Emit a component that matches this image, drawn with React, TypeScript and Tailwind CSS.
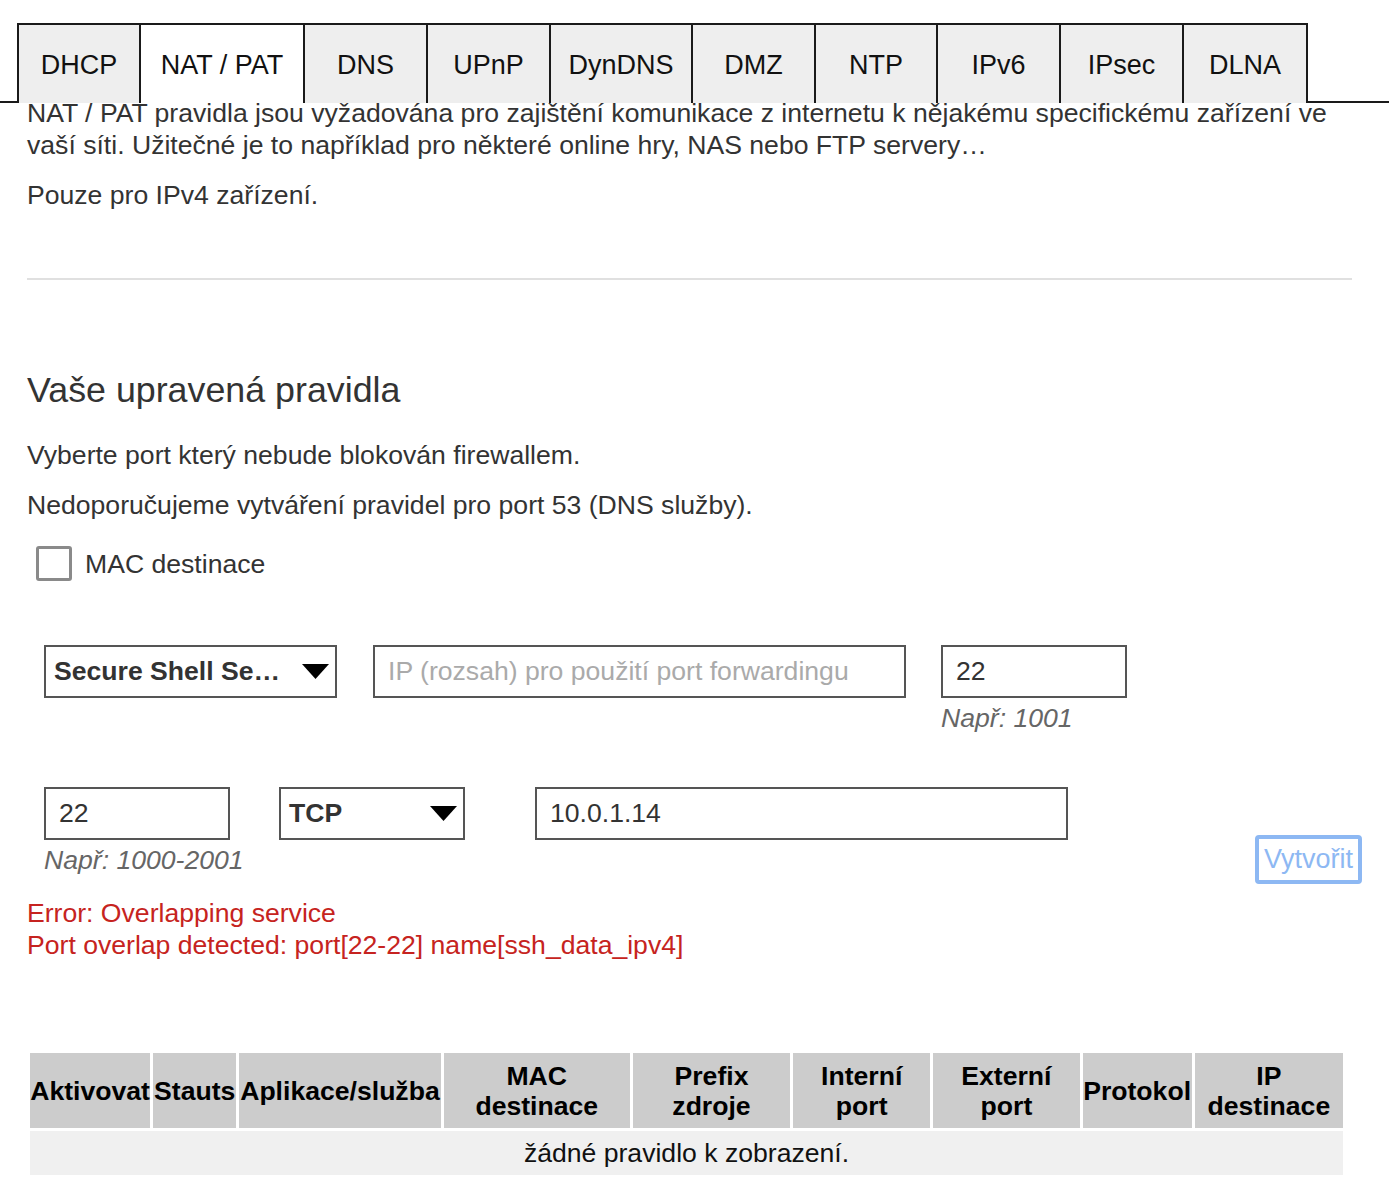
const tabs = [
  { label: "DHCP", w: "w-[124px] border-l-2" },
  { label: "NAT / PAT", w: "w-[164px]", active: true },
  { label: "DNS", w: "w-[123px]" },
  { label: "UPnP", w: "w-[123px]" },
  { label: "DynDNS", w: "w-[142px]" },
  { label: "DMZ", w: "w-[123px]" },
  { label: "NTP", w: "w-[122px]" },
  { label: "IPv6", w: "w-[123px]" },
  { label: "IPsec", w: "w-[123px]" },
  { label: "DLNA", w: "w-[124px]" },
];

const columns = [
  { label: ["Aktivovat"], w: "w-[120px]" },
  { label: ["Stauts"], w: "w-[83px]" },
  { label: ["Aplikace/služba"], w: "w-[201px]" },
  { label: ["MAC", "destinace"], w: "w-[186px]" },
  { label: ["Prefix", "zdroje"], w: "w-[157px]" },
  { label: ["Interní", "port"], w: "w-[137px]" },
  { label: ["Externí", "port"], w: "w-[146px]" },
  { label: ["Protokol"], w: "w-[109px]" },
  { label: ["IP", "destinace"], w: "w-[148px]" },
];

function SelectBox({ value, className }: { value: string; className: string }) {
  return (
    <div
      className={`flex h-[53px] items-center justify-between border-2 border-[#555] bg-white pl-[8px] pr-[6px] ${className}`}
    >
      <span className="text-[26.6px] font-bold text-[#333]">{value}</span>
      <svg width="27" height="15" viewBox="0 0 27 15">
        <polygon points="0,0 27,0 13.5,15" fill="#000" />
      </svg>
    </div>
  );
}

function TextBox({ value, placeholder, className }: { value?: string; placeholder?: string; className: string }) {
  return (
    <div className={`flex h-[53px] items-center border-2 border-[#555] bg-white pl-[13px] ${className}`}>
      {value ? (
        <span className="text-[26.6px] text-[#333]">{value}</span>
      ) : (
        <span className="text-[26.6px] text-[#aaa]">{placeholder}</span>
      )}
    </div>
  );
}

export default function App() {
  return (
    <div className="min-h-[1200px] bg-white font-['Liberation_Sans',Arial,sans-serif] text-[#333]">
      {/* Tabs */}
      <div className="mt-[23px] flex h-[80px]">
        <div className="w-[17px] border-b-2 border-[#1a1a1a]" />
        {tabs.map((t) => (
          <div
            key={t.label}
            className={`flex items-center justify-center border-t-2 border-r-2 border-[#1a1a1a] pt-[2px] text-[27px] text-[#111] ${t.w} ${
              t.active ? "bg-white" : "bg-[#eeeeee]"
            }`}
          >
            {t.label}
          </div>
        ))}
        <div className="flex-1 border-b-2 border-[#1a1a1a]" />
      </div>

      <div className="px-[27px]">
        <p className="-mt-[6px] text-[26.6px] leading-[32px]">
          NAT / PAT pravidla jsou vyžadována pro zajištění komunikace z internetu k nějakému specifickému zařízení ve
          vaší síti. Užitečné je to například pro některé online hry, NAS nebo FTP servery…
        </p>
        <p className="mt-[18px] text-[26.6px] leading-[32px]">Pouze pro IPv4 zařízení.</p>

        <hr className="mr-[10px] mt-[67px] border-t-2 border-[#e0e0e0]" />

        <h2 className="mt-[90px] text-[35.8px] leading-[40px] text-[#333]">Vaše upravená pravidla</h2>

        <p className="mt-[29px] text-[26.6px] leading-[32px]">Vyberte port který nebude blokován firewallem.</p>
        <p className="mt-[18px] text-[26.6px] leading-[32px]">
          Nedoporučujeme vytváření pravidel pro port 53 (DNS služby).
        </p>

        {/* MAC checkbox */}
        <div className="ml-[9px] mt-[25px] flex items-center gap-[13px]">
          <div className="h-[35px] w-[36px] rounded-[3px] border-[3px] border-[#8a8a8a] bg-white" />
          <span className="text-[26.6px] leading-[32px]">MAC destinace</span>
        </div>

        {/* Row 1 */}
        <div className="ml-[17px] mt-[64px] flex items-start">
          <SelectBox value="Secure Shell Se…" className="w-[293px]" />
          <TextBox placeholder="IP (rozsah) pro použití port forwardingu" className="ml-[36px] w-[533px]" />
          <div className="ml-[35px] flex w-[186px] flex-col">
            <TextBox value="22" className="w-[186px]" />
            <span className="mt-[4px] whitespace-nowrap text-[26.6px] italic leading-[32px] text-[#666]">Např: 1001</span>
          </div>
        </div>

        {/* Row 2 */}
        <div className="ml-[17px] mt-[53px] flex items-start">
          <div className="flex w-[186px] shrink-0 flex-col">
            <TextBox value="22" className="w-[186px]" />
            <span className="mt-[4px] whitespace-nowrap text-[26.6px] italic leading-[32px] text-[#666]">
              Např: 1000-2001
            </span>
          </div>
          <SelectBox value="TCP" className="ml-[49px] w-[186px]" />
          <TextBox value="10.0.1.14" className="ml-[70px] w-[533px]" />
          <button className="ml-auto mt-[48px] flex h-[49px] w-[107px] items-center justify-center rounded-[4px] border-[4px] border-[#8db8f3] bg-white text-[27px] text-[#8db8f3]">
            Vytvořit
          </button>
        </div>

        {/* Errors */}
        <div className="mt-[13px] text-[26.6px] leading-[32px] text-[#c62320]">
          <p>Error: Overlapping service</p>
          <p>Port overlap detected: port[22-22] name[ssh_data_ipv4]</p>
        </div>

        {/* Table */}
        <table className="mt-[89px] w-[1319px] border-separate border-spacing-[3px] text-[26.6px]">
          <thead>
            <tr>
              {columns.map((c) => (
                <th
                  key={c.label.join(" ")}
                  className={`h-[75px] bg-[#cccccc] px-0 text-center align-middle font-bold leading-[30px] text-black ${c.w}`}
                >
                  {c.label.map((l) => (
                    <div key={l}>{l}</div>
                  ))}
                </th>
              ))}
            </tr>
          </thead>
          <tbody>
            <tr>
              <td colSpan={9} className="h-[44px] bg-[#f0f0f0] text-center leading-[30px] text-[#111]">
                žádné pravidlo k zobrazení.
              </td>
            </tr>
          </tbody>
        </table>
      </div>
    </div>
  );
}
